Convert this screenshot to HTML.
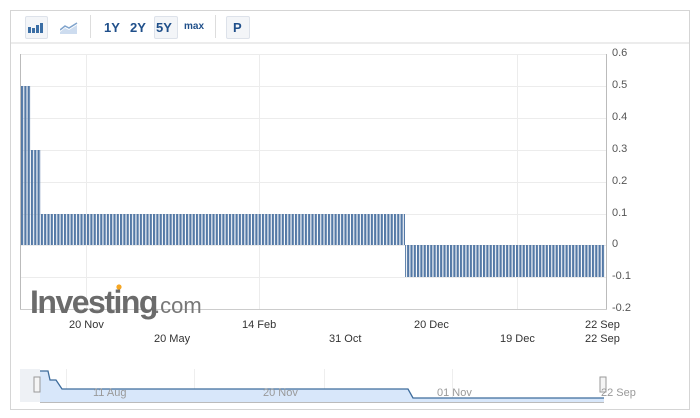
<!DOCTYPE html>
<html><head><style>
body{margin:0;background:#fff;font-family:"Liberation Sans",Arial,sans-serif;}
.wrap{position:absolute;left:10px;top:10px;width:678px;height:398px;border:1px solid #d5d5d5;}
.tb{position:absolute;left:0;top:0;width:678px;height:31px;border-bottom:2px solid #ececec;}
.btn{position:absolute;top:5px;height:21px;border:1px solid #dde2ea;background:#f3f5f8;border-radius:2px;}
.t{position:absolute;font-size:13px;font-weight:bold;color:#1f4f8a;top:9px}
.sep{position:absolute;top:4px;width:1px;height:23px;background:#ddd}
.lab{position:absolute;font-size:11px;color:#333;white-space:nowrap}
.y{position:absolute;left:612px;font-size:11px;color:#555}
</style></head><body>
<div class="wrap">
<div class="tb">
<div class="btn" style="left:14px;width:21px"></div>
<svg style="position:absolute;left:17px;top:12px" width="16" height="10"><rect x="0" y="4" width="3" height="6" fill="#3a6ea5"/><rect x="4" y="5" width="3" height="5" fill="#3a6ea5"/><rect x="8" y="2" width="3" height="8" fill="#3a6ea5"/><rect x="12" y="0" width="3" height="10" fill="#3a6ea5"/></svg>
<svg style="position:absolute;left:49px;top:10px" width="18" height="14"><path d="M0 9 L5 5 L9 7 L17 2" stroke="#7fa3cc" stroke-width="1.5" fill="none"/><path d="M0 11 L5 7 L9 9 L17 4 L17 13 L0 13Z" fill="#cddcef"/></svg>
<div class="sep" style="left:79px"></div>
<div class="t" style="left:93px">1Y</div>
<div class="t" style="left:119px">2Y</div>
<div class="btn" style="left:143px;width:22px"></div>
<div class="t" style="left:145px">5Y</div>
<div class="t" style="left:173px;font-size:10px;top:10px">max</div>
<div class="sep" style="left:204px"></div>
<div class="btn" style="left:215px;width:22px"></div>
<div class="t" style="left:222px">P</div>
</div>
</div>
<svg style="position:absolute;left:0;top:0" width="700" height="418">
<defs><pattern id="p" patternUnits="userSpaceOnUse" width="3.3" height="10" x="21"><rect width="2.2" height="10" fill="#5479a6"/></pattern></defs>
<g stroke="#ececec" stroke-width="1">
<line x1="20" y1="86.5" x2="606" y2="86.5"/><line x1="20" y1="118.5" x2="606" y2="118.5"/><line x1="20" y1="150.5" x2="606" y2="150.5"/><line x1="20" y1="182.5" x2="606" y2="182.5"/><line x1="20" y1="214.5" x2="606" y2="214.5"/><line x1="20" y1="277.5" x2="606" y2="277.5"/><line x1="20" y1="245.5" x2="606" y2="245.5"/><line x1="20" y1="54.5" x2="606" y2="54.5"/>
<line x1="86.5" y1="54" x2="86.5" y2="309"/><line x1="259.5" y1="54" x2="259.5" y2="309"/><line x1="517.5" y1="54" x2="517.5" y2="309"/>
</g>
<line x1="20.5" y1="54" x2="20.5" y2="310" stroke="#bbb"/>
<line x1="606.5" y1="54" x2="606.5" y2="310" stroke="#bbb"/>
<line x1="20" y1="309.5" x2="607" y2="309.5" stroke="#ccc"/>
<rect x="21" y="86" width="10" height="159" fill="url(#p)"/>
<rect x="31" y="150" width="10" height="95" fill="url(#p)"/>
<rect x="41" y="214" width="364" height="31" fill="url(#p)"/>
<rect x="405" y="245" width="200" height="32" fill="url(#p)"/>
<text x="30" y="313" font-family="Liberation Sans" font-weight="bold" font-size="32" fill="#6b6b6b" letter-spacing="-1.5">Investing</text>
<circle cx="119" cy="287" r="2.6" fill="#f5a623"/>
<text x="154" y="313" font-family="Liberation Sans" font-size="22" fill="#777">.com</text>
<g stroke="#eee"><line x1="66.5" y1="369" x2="66.5" y2="402"/><line x1="194.5" y1="369" x2="194.5" y2="402"/><line x1="324.5" y1="369" x2="324.5" y2="402"/><line x1="452.5" y1="369" x2="452.5" y2="402"/></g>
<rect x="20" y="369" width="20" height="33" fill="#eef1f5"/>
<path d="M40 371 L48 371 L50 380 L56 380 L62 389 L408 389 L413 398 L604 398 L604 402 L40 402Z" fill="#d8e7fa"/>
<path d="M40 371 L48 371 L50 380 L56 380 L62 389 L408 389 L413 398 L604 398" stroke="#3d6c9c" stroke-width="1.3" fill="none"/>
<line x1="40" y1="402.5" x2="604" y2="402.5" stroke="#bbb"/>
<rect x="34" y="377" width="6" height="15" fill="#f5f5f5" stroke="#999"/>
<rect x="600" y="377" width="6" height="15" fill="#f5f5f5" stroke="#999"/>
<g font-family="Liberation Sans" font-size="11" fill="#999"><text x="93" y="396">11 Aug</text><text x="263" y="396">20 Nov</text><text x="437" y="396">01 Nov</text><text x="601" y="396">22 Sep</text></g>
</svg>
<div class="y" style="top:47px">0.6</div><div class="y" style="top:79px">0.5</div><div class="y" style="top:111px">0.4</div><div class="y" style="top:143px">0.3</div><div class="y" style="top:175px">0.2</div><div class="y" style="top:207px">0.1</div><div class="y" style="top:238px">0</div><div class="y" style="top:270px">-0.1</div><div class="y" style="top:302px">-0.2</div>
<div class="lab" style="left:69px;top:319px">20 Nov</div>
<div class="lab" style="left:154px;top:333px">20 May</div>
<div class="lab" style="left:242px;top:319px">14 Feb</div>
<div class="lab" style="left:329px;top:333px">31 Oct</div>
<div class="lab" style="left:414px;top:319px">20 Dec</div>
<div class="lab" style="left:500px;top:333px">19 Dec</div>
<div class="lab" style="left:585px;top:319px">22 Sep</div>
<div class="lab" style="left:585px;top:333px">22 Sep</div>
</body></html>
